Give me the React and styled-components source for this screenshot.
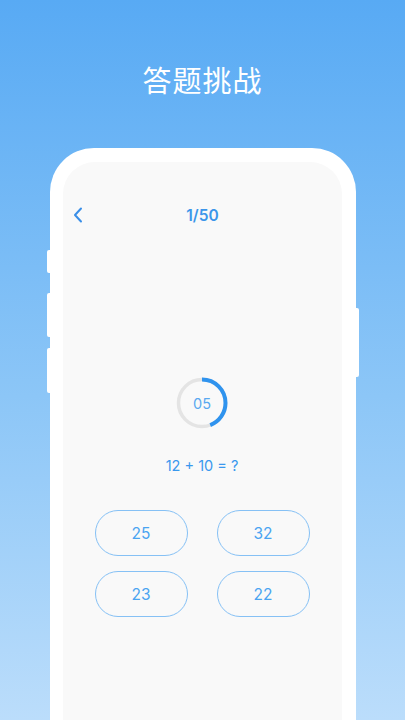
import React from "react";
import styled, { createGlobalStyle } from "styled-components";

const GlobalStyle = createGlobalStyle`
	html, body {
		margin: 0;
		padding: 0;
	}
	body {
		font-family: Inter, "Noto Sans", "Noto Sans CJK SC", sans-serif;
	}
`;

const options = ["25", "32", "23", "22"];
const progress = 0.44;

export default function App() {
	const r = 23.5;
	const c = 2 * Math.PI * r;

	return (
		<Page>
			<GlobalStyle />
			<Title>答题挑战</Title>
			<Phone>
				<SideKey side="left" top={102} len={23} />
				<SideKey side="left" top={145} len={44} />
				<SideKey side="left" top={200} len={45} />
				<SideKey side="right" top={160} len={69} />
				<Screen>
					<Header>
						<BackButton aria-label="back">
							<svg width="10" height="16" viewBox="0 0 10 16" fill="none">
								<path
									d="M8 1.5L2 8l6 6.5"
									stroke="#3a8fe8"
									strokeWidth="2"
									strokeLinecap="round"
									strokeLinejoin="round"
								/>
							</svg>
						</BackButton>
						<Counter>1/50</Counter>
					</Header>

					<Timer>
						<svg width="52" height="52" viewBox="0 0 52 52">
							<circle cx="26" cy="26" r={r} fill="none" stroke="#e4e4e4" strokeWidth="3.5" />
							<circle
								cx="26"
								cy="26"
								r={r}
								fill="none"
								stroke="#2f93ee"
								strokeWidth="4"
								strokeDasharray={`${c * progress} ${c}`}
								transform="rotate(-90 26 26)"
							/>
						</svg>
						<TimerText>05</TimerText>
					</Timer>

					<Question>12 + 10 = ?</Question>

					<Options>
						{options.map((o) => (
							<Option key={o}>{o}</Option>
						))}
					</Options>
				</Screen>
			</Phone>
		</Page>
	);
}

// styled components
const Page = styled.div`
	width: 405px;
	height: 720px;
	overflow: hidden;
	display: flex;
	flex-direction: column;
	align-items: center;
	background: linear-gradient(180deg, #58aaf4 0%, #8cc6f7 55%, #bbddfb 100%);
`;

const Title = styled.h1`
	margin: 61px 0 0;
	height: 36px;
	line-height: 36px;
	font-family: "Noto Sans CJK SC", sans-serif;
	font-weight: 400;
	font-size: 29px;
	letter-spacing: 1px;
	color: #ffffff;
`;

const Phone = styled.div`
	position: relative;
	margin-top: 51px;
	width: 306px;
	height: 640px;
	flex-shrink: 0;
	box-sizing: border-box;
	padding: 14px 14px 0 13px;
	background: #ffffff;
	border-radius: 44px;
	display: flex;
`;

const SideKey = styled.span`
	position: absolute;
	top: ${(p) => p.top}px;
	height: ${(p) => p.len}px;
	width: 3px;
	background: #ffffff;
	${(p) => (p.side === "left" ? "left: -3px;" : "right: -3px;")}
	border-radius: ${(p) => (p.side === "left" ? "2px 0 0 2px" : "0 2px 2px 0")};
`;

const Screen = styled.div`
	flex: 1;
	background: #f9f9f9;
	border-radius: 32px 32px 0 0;
	display: flex;
	flex-direction: column;
	align-items: center;
`;

const Header = styled.div`
	position: relative;
	align-self: stretch;
	margin-top: 41px;
	height: 24px;
	display: flex;
	align-items: center;
	justify-content: center;
`;

const BackButton = styled.button`
	position: absolute;
	left: 8px;
	top: 4px;
	width: 14px;
	height: 16px;
	padding: 0;
	border: none;
	background: none;
	display: flex;
	align-items: center;
	justify-content: center;
`;

const Counter = styled.span`
	font-family: Inter, "Noto Sans", sans-serif;
	font-size: 15.5px;
	font-weight: 600;
	color: #3b96ea;
	margin-left: 1px;
`;

const Timer = styled.div`
	position: relative;
	margin-top: 150px;
	width: 52px;
	height: 52px;
	display: flex;
	align-items: center;
	justify-content: center;

	svg {
		position: absolute;
		inset: 0;
	}
`;

const TimerText = styled.span`
	position: relative;
	font-family: Inter, "Noto Sans", sans-serif;
	font-size: 14.5px;
	color: #5aa9f0;
`;

const Question = styled.div`
	margin-top: 27px;
	height: 20px;
	line-height: 20px;
	font-family: Inter, "Noto Sans", sans-serif;
	font-size: 14.5px;
	color: #3a98ee;
`;

const Options = styled.div`
	margin-top: 34px;
	display: grid;
	grid-template-columns: repeat(2, 93px);
	column-gap: 29px;
	row-gap: 15px;
`;

const Option = styled.button`
	height: 46px;
	box-sizing: border-box;
	border: 1.5px solid #86c1f5;
	border-radius: 23px;
	background: transparent;
	font-family: Inter, "Noto Sans", sans-serif;
	font-size: 15.5px;
	color: #4aa4f1;
	padding: 0;
`;
